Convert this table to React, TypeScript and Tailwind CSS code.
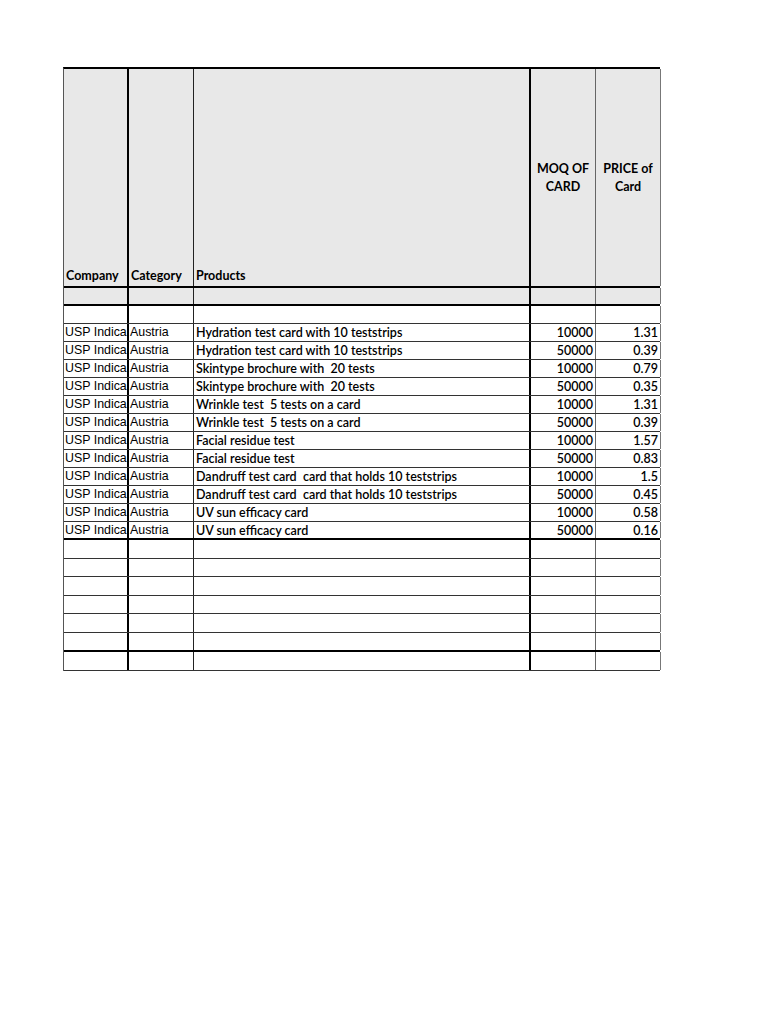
import React from 'react';

const rows = [
  ['Hydration test card with 10 teststrips', '10000', '1.31'],
  ['Hydration test card with 10 teststrips', '50000', '0.39'],
  ['Skintype brochure with  20 tests', '10000', '0.79'],
  ['Skintype brochure with  20 tests', '50000', '0.35'],
  ['Wrinkle test  5 tests on a card', '10000', '1.31'],
  ['Wrinkle test  5 tests on a card', '50000', '0.39'],
  ['Facial residue test', '10000', '1.57'],
  ['Facial residue test', '50000', '0.83'],
  ['Dandruff test card  card that holds 10 teststrips', '10000', '1.5'],
  ['Dandruff test card  card that holds 10 teststrips', '50000', '0.45'],
  ['UV sun efficacy card', '10000', '0.58'],
  ['UV sun efficacy card', '50000', '0.16'],
];

const grid = 'grid grid-cols-[65px_65px_337px_65px_65px]';
const c1 = 'border-r-2 border-black overflow-hidden whitespace-nowrap';
const c2 = 'border-r border-[#222] overflow-hidden whitespace-nowrap';
const c3 = 'border-r-2 border-black overflow-hidden whitespace-pre';
const c4 = 'border-r border-[#666] overflow-hidden whitespace-nowrap';
const c5 = 'border-r border-[#777] overflow-hidden whitespace-nowrap';

const arial = "font-['Liberation_Sans',Arial,sans-serif] text-[12.4px]";
const cal = "font-['Lato',sans-serif] text-[12.5px] font-semibold";

function EmptyRow({ gray, h, thick }: { gray?: boolean; h: string; thick?: boolean }) {
  return (
    <div className={`${grid} ${h} ${thick ? 'border-b-2 border-black' : 'border-b border-[#333]'} ${gray ? 'bg-[#e8e8e8]' : ''}`}>
      <div className={c1} />
      <div className={c2} />
      <div className={c3} />
      <div className={c4} />
      <div className={c5} />
    </div>
  );
}

export default function App() {
  return (
    <div className="min-h-[1024px] bg-white pt-[67px] pl-[63px] text-black">
      <div className="w-[597px] border-t-2 border-l border-black border-l-[#555]">
        {/* header */}
        <div className={`${grid} h-[219px] border-b-2 border-black bg-[#e8e8e8] font-['Lato',sans-serif] text-[12.5px] font-bold`}>
          <div className={`${c1} flex items-end pl-[2px] leading-[18px] pb-[1px]`}>Company</div>
          <div className={`${c2} flex items-end pl-[2px] leading-[18px] pb-[1px]`}>Category</div>
          <div className={`${c3} flex items-end pl-[2px] leading-[18px] pb-[1px]`}>Products</div>
          <div className={`${c4} flex items-center justify-center text-center leading-[18px]`}>
            <span>MOQ OF<br />CARD</span>
          </div>
          <div className={`${c5} flex items-center justify-center text-center leading-[18px]`}>
            <span>PRICE of<br />Card</span>
          </div>
        </div>
        <EmptyRow gray h="h-[18px]" thick />
        <EmptyRow h="h-[18px]" />
        {rows.map((r, i) => (
          <div
            key={i}
            className={`${grid} h-[18px] leading-[17px] ${i === rows.length - 1 ? 'border-b-2 border-black' : 'border-b border-[#333]'}`}
          >
            <div className={`${c1} ${arial} pl-[1px]`}>USP Indica</div>
            <div className={`${c2} ${arial} pl-[1px]`}>Austria</div>
            <div className={`${c3} ${cal} pl-[2px]`}>{r[0]}</div>
            <div className={`${c4} ${cal} text-right pr-[2px]`}>{r[1]}</div>
            <div className={`${c5} ${cal} text-right pr-[2px]`}>{r[2]}</div>
          </div>
        ))}
        <EmptyRow h="h-[18.5px]" />
        <EmptyRow h="h-[18.5px]" />
        <EmptyRow h="h-[18.5px]" />
        <EmptyRow h="h-[18.5px]" />
        <EmptyRow h="h-[18.5px]" />
        <EmptyRow h="h-[19px]" thick />
        <EmptyRow h="h-[19px]" />
      </div>
    </div>
  );
}
